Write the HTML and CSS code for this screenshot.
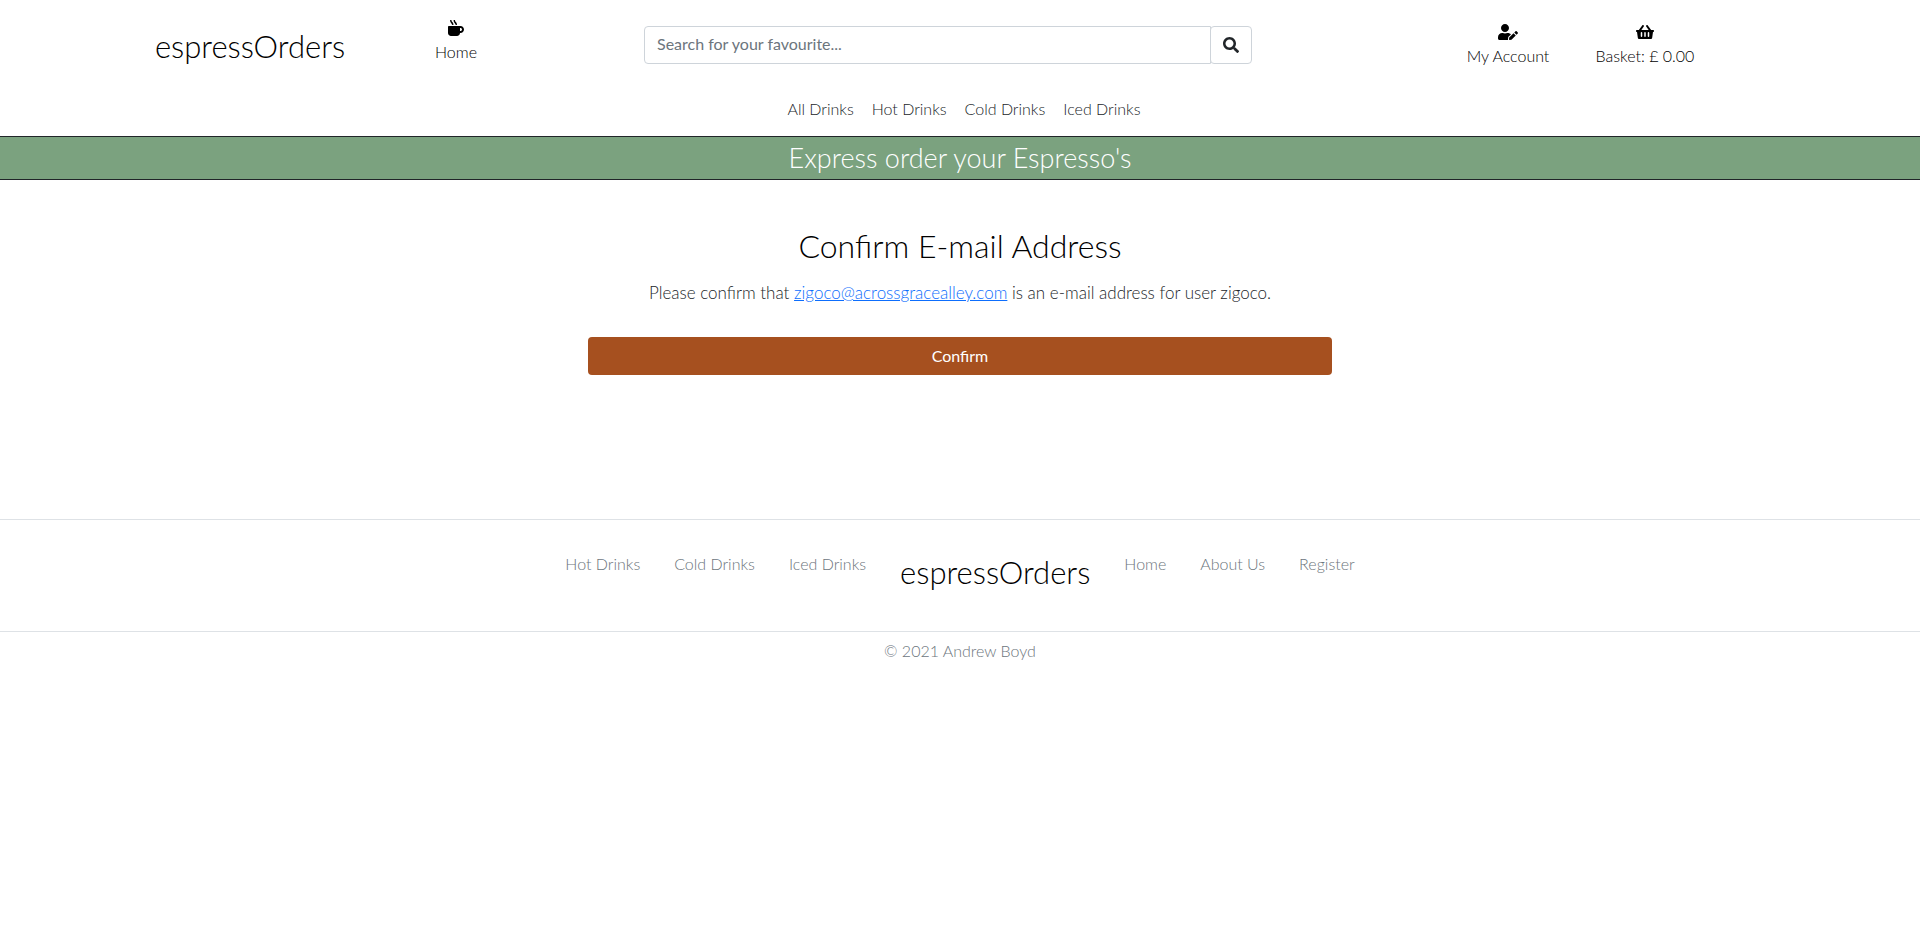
FILE: index.html
```html
<!DOCTYPE html>
<html lang="en">
<head>
<meta charset="utf-8">
<meta name="viewport" content="width=device-width, initial-scale=1">
<title>espressOrders</title>
<link rel="stylesheet" href="styles.css">
</head>
<body>
<header>
  <div class="topbar">
    <a class="brand topbar-brand" href="#">espressOrders</a>
    <a class="icon-link home-link" href="#">
      <svg class="icon" viewBox="0 0 512 512" aria-hidden="true"><path d="M127.1 146.500c1.300 7.700 8 13.500 16 13.500h16.500c9.800 0 17.600-8.500 16.300-18-3.800-28.200-16.400-54.200-36.600-74.700-14.400-14.700-23.600-33.300-26.400-53.500C111.800 5.900 105 0 96.800 0H80.400C70.600 0 63 8.500 64.100 18c3.900 31.900 18 61.300 40.600 84.400 12 12.200 19.700 27.500 22.400 44.100zm112 0c1.300 7.700 8 13.500 16 13.500h16.500c9.800 0 17.600-8.500 16.300-18-3.800-28.200-16.400-54.200-36.600-74.700-14.400-14.700-23.600-33.300-26.400-53.500C223.800 5.900 217 0 208.800 0h-16.400c-9.800 0-17.500 8.500-16.300 18 3.900 31.900 18 61.300 40.600 84.400 12 12.200 19.700 27.500 22.400 44.100zM400 192H32c-17.700 0-32 14.300-32 32v192c0 53 43 96 96 96h192c53 0 96-43 96-96h16c61.800 0 112-50.200 112-112s-50.200-112-112-112zm0 160h-16v-96h16c26.500 0 48 21.500 48 48s-21.500 48-48 48z"/></svg>
      <span>Home</span>
    </a>
    <form class="search" role="search">
      <input class="search-input" type="text" aria-label="Search for your favourite" placeholder="Search for your favourite...">
      <button class="search-button" type="button" aria-label="Search">
        <svg class="icon" viewBox="0 0 512 512" aria-hidden="true"><path d="M505 442.700L405.300 343c-4.500-4.500-10.600-7-17-7H372c27.600-35.300 44-79.700 44-128C416 93.100 322.900 0 208 0S0 93.100 0 208s93.100 208 208 208c48.300 0 92.700-16.400 128-44v16.300c0 6.400 2.500 12.500 7 17l99.700 99.700c9.400 9.400 24.600 9.400 33.900 0l28.300-28.300c9.400-9.400 9.400-24.600.1-34zM208 336c-70.700 0-128-57.200-128-128 0-70.700 57.200-128 128-128 70.700 0 128 57.200 128 128 0 70.700-57.200 128-128 128z"/></svg>
      </button>
    </form>
    <a class="icon-link account-link" href="#">
      <svg class="icon icon-wide" viewBox="0 0 640 512" aria-hidden="true"><path d="M224 256c70.700 0 128-57.300 128-128S294.700 0 224 0 96 57.300 96 128s57.300 128 128 128zm89.600 32h-16.700c-22.200 10.200-46.900 16-72.900 16s-50.600-5.800-72.900-16h-16.700C60.200 288 0 348.200 0 422.400V464c0 26.500 21.500 48 48 48h274.900c-2.400-6.800-3.400-14-2.600-21.300l6.800-60.900 1.200-11.100 7.900-7.900 77.300-77.300c-24.500-27.700-60-45.500-99.900-45.500zm45.300 145.300l-6.800 61c-1.100 10.200 7.500 18.800 17.600 17.600l60.900-6.800 137.900-137.900-71.700-71.700-137.900 137.800zM633 268.900L595.100 231c-9.300-9.300-24.500-9.300-33.800 0l-37.800 37.800-4.100 4.100 71.800 71.700 41.800-41.800c9.300-9.400 9.300-24.500 0-33.900z"/></svg>
      <span>My Account</span>
    </a>
    <a class="icon-link basket-link" href="#">
      <svg class="icon icon-basket" viewBox="0 0 576 512" aria-hidden="true"><path d="M576 216v16c0 13.255-10.745 24-24 24h-8l-26.113 182.788C514.509 462.435 494.257 480 470.370 480H105.630c-23.887 0-44.139-17.565-47.518-41.212L32 256h-8c-13.255 0-24-10.745-24-24v-16c0-13.255 10.745-24 24-24h67.341l106.780-146.821c10.395-14.292 30.407-17.453 44.701-7.058 14.293 10.395 17.453 30.408 7.058 44.701L170.477 192h235.046L326.120 82.821c-10.395-14.292-7.234-34.306 7.059-44.701 14.291-10.395 34.306-7.235 44.701 7.058L484.659 192H552c13.255 0 24 10.745 24 24zM312 392V280c0-13.255-10.745-24-24-24s-24 10.745-24 24v112c0 13.255 10.745 24 24 24s24-10.745 24-24zm112 0V280c0-13.255-10.745-24-24-24s-24 10.745-24 24v112c0 13.255 10.745 24 24 24s24-10.745 24-24zm-224 0V280c0-13.255-10.745-24-24-24s-24 10.745-24 24v112c0 13.255 10.745 24 24 24s24-10.745 24-24z"/></svg>
      <span>Basket: £ 0.00</span>
    </a>
  </div>
  <nav class="drinks-nav" aria-label="Drinks">
    <a href="#">All Drinks</a>
    <a href="#">Hot Drinks</a>
    <a href="#">Cold Drinks</a>
    <a href="#">Iced Drinks</a>
  </nav>
  <div class="banner">Express order your Espresso's</div>
</header>
<main class="confirm">
  <h1>Confirm E-mail Address</h1>
  <p>Please confirm that <a href="mailto:zigoco@acrossgracealley.com">zigoco@acrossgracealley.com</a> is an e-mail address for user zigoco.</p>
  <button class="confirm-button" type="button">Confirm</button>
</main>
<footer>
  <nav class="footer-nav" aria-label="Footer">
    <a href="#">Hot Drinks</a>
    <a href="#">Cold Drinks</a>
    <a href="#">Iced Drinks</a>
    <a class="brand" href="#">espressOrders</a>
    <a href="#">Home</a>
    <a href="#">About Us</a>
    <a href="#">Register</a>
  </nav>
  <p class="copyright">© 2021 Andrew Boyd</p>
</footer>
</body>
</html>
```

FILE: styles.css
```css
* { box-sizing: border-box; }

body {
  margin: 0;
  background: #fff;
  color: #212529;
  font-family: Lato, "Open Sans", sans-serif;
  font-size: 16px;
  font-weight: 300;
  line-height: 24px;
}

a { color: inherit; text-decoration: none; }

.icon { display: block; width: 16px; height: 16px; fill: currentColor; }
.icon-wide { width: 20px; }
.icon-basket { width: 18px; }

.brand {
  font-size: 31px;
  line-height: 40px;
  color: #000;
}

.topbar {
  display: grid;
  grid-template-columns: 147fr 206fr 206fr 85fr 608fr 188fr 136fr 138fr 206fr;
  align-items: start;
  padding-top: 20px;
}

.topbar-brand { grid-column: 2; justify-self: center; padding-top: 6px; }

.icon-link {
  display: flex;
  flex-direction: column;
  align-items: center;
  gap: 4px;
  color: #000;
  white-space: nowrap;
}

.home-link { grid-column: 3; }
.account-link { grid-column: 7; padding-top: 4px; }
.basket-link { grid-column: 8; padding-top: 4px; }

.search { grid-column: 5; display: flex; padding-top: 6px; }

.search-input,
.search-button {
  height: 38px;
  border: 1px solid #ced4da;
  background: #fff;
  color: #212529;
}

.search-input {
  flex: 1;
  min-width: 0;
  padding: 4px 12px 8px;
  border-radius: 4px 0 0 4px;
  font: 400 16px/24px Lato, "Open Sans", sans-serif;
}

.search-input::placeholder { color: #6c757d; opacity: 1; }

.search-button {
  margin-left: -1px;
  padding: 0 12px;
  border-radius: 4px;
}

.drinks-nav {
  display: flex;
  justify-content: center;
  gap: 18px;
  padding: 29px 0 15px 8px;
}

.banner {
  border: solid #212529;
  border-width: 1px 0;
  background: #7ba27f;
  color: #fff;
  font-size: 27px;
  line-height: 42px;
  text-align: center;
}

.confirm {
  width: 38.75%;
  margin: 0 auto;
  padding: 46px 0 144px;
  text-align: center;
}

.confirm h1 {
  margin: 0 0 15px;
  font-size: 32px;
  font-weight: 300;
  line-height: 40px;
  color: #000;
}

.confirm p { margin: 0 0 32px; font-size: 17px; }
.confirm p a { color: #0d6efd; text-decoration: underline; }

.confirm-button {
  width: 100%;
  height: 38px;
  border: 0;
  border-radius: 4px;
  background: #a6501f;
  color: #fff;
  font: 400 16px/24px Lato, "Open Sans", sans-serif;
}

footer { color: #6c757d; }

.footer-nav {
  display: flex;
  justify-content: center;
  gap: 34px;
  padding: 32px 0 39px;
  border: solid #dee2e6;
  border-width: 1px 0;
}

.copyright { margin: 0; padding: 7px 0; text-align: center; }
```
